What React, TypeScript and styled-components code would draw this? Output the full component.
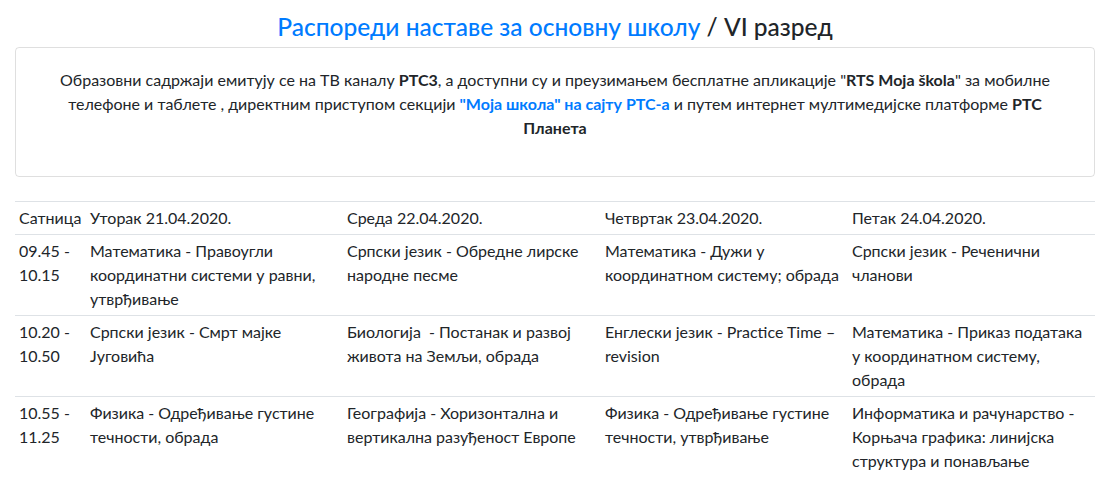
import React from "react";
import styled, { createGlobalStyle } from "styled-components";

const GlobalStyle = createGlobalStyle`
  *, *::before, *::after { box-sizing: border-box; }
  body {
    margin: 0;
    background: #fff;
    color: #212529;
    font-family: Lato, "Liberation Sans", sans-serif;
    font-size: 16px;
    line-height: 1.5;
  }
`;

const Container = styled.div`
  width: 1110px;
  padding: 12px 15px 0;
`;

const Title = styled.h4`
  margin: 0 0 6px;
  font-size: 24.5px;
  font-weight: 500;
  line-height: 1.2;
  text-align: center;
  color: #212529;
`;

const TitleLink = styled.a`
  color: #007bff;
  text-decoration: none;
`;

const Card = styled.div`
  border: 1px solid rgba(0, 0, 0, 0.125);
  border-radius: 4px;
  padding: 20px;
  margin-bottom: 24px;
`;

const Lead = styled.p`
  margin: 0 0 16px;
  padding: 0 18px;
  text-align: center;
`;

const InlineLink = styled.a`
  color: #007bff;
  font-weight: 700;
  text-decoration: none;
`;

const Table = styled.table`
  width: 100%;
  border-collapse: collapse;
  table-layout: fixed;
`;

const Cell = styled.td`
  padding: 4px;
  border-top: 1px solid #dee2e6;
  vertical-align: top;
  text-align: left;
`;

type Row = { time: string; items: string[] };

const days = [
  "Уторак 21.04.2020.",
  "Среда 22.04.2020.",
  "Четвртак 23.04.2020.",
  "Петак 24.04.2020.",
];

const rows: Row[] = [
  {
    time: "09.45 - 10.15",
    items: [
      "Математика - Правоугли координатни системи у равни, утврђивање",
      "Српски језик - Обредне лирске народне песме",
      "Математика - Дужи у координатном систему; обрада",
      "Српски језик - Реченични чланови",
    ],
  },
  {
    time: "10.20 - 10.50",
    items: [
      "Српски језик - Смрт мајке Југовића",
      "Биологија\u00a0 - Постанак и развој живота на Земљи, обрада",
      "Енглески језик - Practice Time – revision",
      "Математика - Приказ података у координатном систему, обрада",
    ],
  },
  {
    time: "10.55 - 11.25",
    items: [
      "Физика - Одређивање густине течности, обрада",
      "Географија - Хоризонтална и вертикална разуђеност Европе",
      "Физика - Одређивање густине течности, утврђивање",
      "Информатика и рачунарство - Корњача графика: линијска структура и понављање",
    ],
  },
];

const widths = [71, 257, 258, 247, 247];

export default function App() {
  return (
    <Container>
      <GlobalStyle />
      <Title>
        <TitleLink href="#">Распореди наставе за основну школу</TitleLink> / VI разред
      </Title>
      <Card>
        <Lead>
          Образовни садржаји емитују се на ТВ каналу <b>РТС3</b>, а доступни су и преузимањем
          бесплатне апликације "<b>RTS Moja škola</b>" за мобилне телефоне и таблете , директним
          приступом секцији <InlineLink href="#">"Моја школа" на сајту РТС-а</InlineLink> и путем
          интернет мултимедијске платформе <b>РТС Планета</b>
        </Lead>
      </Card>
      <Table>
        <colgroup>
          {widths.map((w, i) => (
            <col key={i} style={{ width: w }} />
          ))}
        </colgroup>
        <tbody>
          <tr>
            <Cell>Сатница</Cell>
            {days.map((d) => (
              <Cell key={d}>{d}</Cell>
            ))}
          </tr>
          {rows.map((r) => (
            <tr key={r.time}>
              <Cell>{r.time}</Cell>
              {r.items.map((it, i) => (
                <Cell key={i}>{it}</Cell>
              ))}
            </tr>
          ))}
        </tbody>
      </Table>
    </Container>
  );
}
